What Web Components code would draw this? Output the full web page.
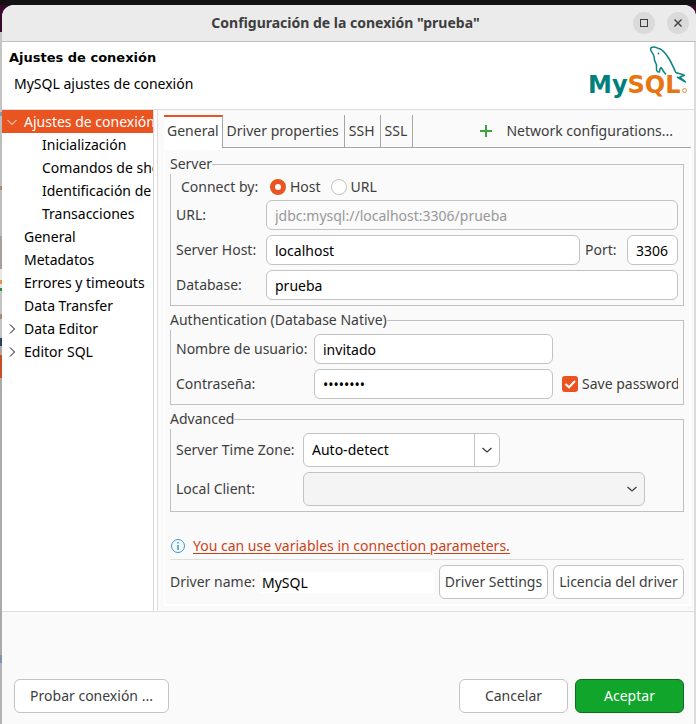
<!DOCTYPE html>
<html lang="es">
<head>
<meta charset="utf-8">
<title>Configuración de la conexión "prueba"</title>
<style>
  html, body { margin: 0; min-height: 100vh; }
  body { display: flex; font: 14px/20px "Noto Sans", "Open Sans", sans-serif; color: #3d3d3d; }
</style>
</head>
<body>
<connection-dialog></connection-dialog>
<script>
const css = `
  *, *::before, *::after { box-sizing: border-box; }
  button, input, select { font: inherit; color: inherit; margin: 0; }
  .chevron { fill: none; stroke: #3d3d3d; stroke-width: 1.3; }
`;
const define = (name, template) => customElements.define(name, class extends HTMLElement {
  constructor() {
    super();
    this.attachShadow({ mode: "open" });
  }
  connectedCallback() {
    const a = (key, fallback = "") => this.getAttribute(key) ?? fallback;
    this.shadowRoot.innerHTML = `<style>${css}</style>` + template(a, this);
  }
});

define("push-button", a => `
  <style>
    :host { display: block; flex: none; }
    button { width: 100%; height: 34px; padding: 0 4px; border: 1px solid #c3c3c3; border-radius: 6px;
      background: #fff; white-space: nowrap; }
    :host([primary]) button { background: #12a52b; border-color: #0c6f1d; color: #fff; }
  </style>
  <button type="button"><slot></slot></button>`);

define("title-bar", a => `
  <style>
    :host { display: grid; grid-template-columns: 1fr auto 1fr; align-items: center; height: 37px;
      background: #ebebeb; border-bottom: 1px solid #bfbfbf; border-radius: 12px 12px 0 0; padding-right: 7px; }
    h1 { grid-column: 2; margin: 0; font-size: 14px; line-height: 20px; font-weight: 700; color: #3d3d3d; white-space: nowrap; }
    .buttons { display: flex; justify-content: flex-end; gap: 12px; }
    button { width: 22px; height: 22px; padding: 0; border: 0; border-radius: 50%; background: #dadada; display: grid; place-items: center; }
    svg { fill: none; stroke: #3d3d3d; stroke-width: 1; }
  </style>
  <h1><slot></slot></h1>
  <div class="buttons">
    <button aria-label="Maximizar"><svg width="10" height="10"><rect x="1.5" y="1.5" width="7" height="7"/></svg></button>
    <button aria-label="Cerrar"><svg width="10" height="10" style="stroke-width:1.4"><path d="M1.5 1.5 8.5 8.5M8.5 1.5 1.5 8.5"/></svg></button>
  </div>`);

define("mysql-logo", a => `
  <style>:host { display: block; flex: none; } svg { display: block; }</style>
  <svg width="106" height="60" viewBox="0 0 106 60" role="img" aria-label="MySQL">
    <text x="2" y="51" font-family="DejaVu Sans" font-size="24" font-weight="700" fill="#00807c">My<tspan fill="#e87511">SQL</tspan></text>
    <circle cx="98.500" cy="48.500" r="2" fill="none" stroke="#e87511" stroke-width=".8"/>
    <path fill="none" stroke="#0b8583" stroke-width="1.500" stroke-linejoin="round" d="M66 10.500C64.500 8 63.500 5.500 66.500 5.300C68 4.600 70.500 5.700 72 6.300C76 7 80.500 12.500 83.500 17.500C85.500 21 88 26.500 89.800 30.500C92.500 31.500 96 32.200 98.500 33.500C97 34.500 95 34 93.800 35C95 37 98 38 99.500 40C96 38 93.500 36.500 91 35M66 10.500C68 12.500 68.300 15 68.500 18C69 20.500 71.500 22 70.500 26C70 29 72 30.500 73.500 30C73.800 28 73.500 27 75 25.500C76.500 28 78 30.500 80 32.500"/>
    <circle cx="72.500" cy="11.500" r=".9" fill="#0b8583"/>
  </svg>`);

define("dialog-header", a => `
  <style>
    :host { display: flex; justify-content: space-between; height: 68px; background: #fff; border-bottom: 1px solid #dedede; color: #000; }
    .text { padding: 6px 0 0 7px; }
    h2 { margin: 0 0 6px; font: 700 13px/20px "DejaVu Sans", sans-serif; }
    p { margin: 0 0 0 5px; }
    mysql-logo { margin-right: 2px; }
  </style>
  <div class="text"><h2>${a("heading")}</h2><p><slot></slot></p></div>
  <mysql-logo></mysql-logo>`);

define("tree-item", a => `
  <style>
    :host { display: flex; align-items: center; height: 23px; overflow: hidden; color: #000; white-space: nowrap; padding-left: 4px; }
    :host([child]) { padding-left: 22px; }
    :host([selected]) { background: #e95420; color: #fff; }
    svg { flex: none; width: 12px; height: 12px; margin-right: 6px; fill: none; stroke: currentColor; stroke-width: 1; }
  </style>
  <svg viewBox="0 0 12 12">${{ open: '<path d="M1.500 4 6 8.500 10.500 4"/>', closed: '<path d="M4 1.500 8.500 6 4 10.500"/>' }[a("state")] || ""}</svg>
  <slot></slot>`);

define("settings-tree", a => `
  <style>:host { display: block; background: #fff; border-right: 1px solid #d9d9d9; overflow: hidden; }</style>
  <nav role="tree"><slot></slot></nav>`);

define("tab-bar", a => `
  <style>
    :host { display: flex; height: 33px; }
    button { flex: none; height: 33px; border: 0; border-right: 1px solid #a6a6a6; border-bottom: 1px solid #a6a6a6; background: none; padding: 0 5px 0 4px; white-space: nowrap; }
    button[aria-selected=true] { background: #fff; border-top: 2px solid #e95420; border-bottom: 0; padding: 0 3px 3px; }
    .net { flex: 1; display: flex; justify-content: flex-end; align-items: center; border-bottom: 1px solid #a6a6a6; padding-right: 13px; }
    .net button { border: 0; display: flex; align-items: center; gap: 14px; }
  </style>
  <button role="tab" aria-selected="true">General</button>
  <button role="tab">Driver properties</button>
  <button role="tab">SSH</button>
  <button role="tab">SSL</button>
  <div class="net"><button><svg width="12" height="12"><path d="M6 0V12M0 6H12" stroke="#3fa33f" stroke-width="2"/></svg>Network configurations...</button></div>`);

define("group-box", a => `
  <style>
    :host { display: block; }
    fieldset { margin: 0; padding: 0; border: 1px solid #c0c0c0; min-width: 0; }
    legend { padding: 0; margin-left: -1px; height: 20px; background: #fafafa; }
    .rows { display: grid; gap: 5px; padding: 4px 5px 5px; }
  </style>
  <fieldset><legend>${a("heading")}</legend><div class="rows"><slot></slot></div></fieldset>`);

define("form-row", a => `
  <style>:host { display: flex; align-items: center; gap: 5px; min-width: 0; overflow: hidden; }</style><slot></slot>`);

define("text-field", a => `
  <style>
    :host { display: flex; align-items: center; flex: 1; min-width: 0; }
    :host([fixed]) { flex: none; }
    label { flex: none; width: var(--label, auto); white-space: nowrap; }
    input { flex: 1; min-width: 0; width: 100%; height: 30px; padding: 0 8px; border: 1px solid #c3c3c3; border-radius: 6px; background: #fff; color: #000; outline: 0; }
    input:disabled { background: #fafafa; color: #989898; }
    :host([plain]) input { height: 21px; border: 0; border-radius: 0; padding: 0 2px; }
  </style>
  <label for="f">${a("label")}</label>
  <input id="f" type="${a("type", "text")}" value="${a("value")}" ${a("off", null) !== null ? "disabled" : ""}>`);

define("connect-choice", a => `
  <style>
    :host { display: flex; align-items: center; height: 17px; padding-left: 5px; }
    .caption { width: 89px; }
    label { display: flex; align-items: center; gap: 4px; margin-right: 10px; }
    input { appearance: none; width: 16px; height: 16px; border: 1px solid #c3c3c3; border-radius: 50%; background: #fff; }
    input:checked { border: 5px solid #e95420; }
  </style>
  <span class="caption">Connect by:</span>
  <label><input type="radio" name="by" checked>Host</label>
  <label><input type="radio" name="by">URL</label>`);

define("check-box", a => `
  <style>
    :host { display: block; flex: 1; min-width: 0; overflow: hidden; margin-left: 4px; }
    label { display: flex; align-items: center; gap: 4px; white-space: nowrap; }
    .box { display: grid; flex: none; }
    .box > * { grid-area: 1 / 1; }
    input { appearance: none; width: 16px; height: 16px; border-radius: 3px; background: #e95420; }
    svg { pointer-events: none; fill: none; stroke: #fff; stroke-width: 2; }
  </style>
  <label><span class="box"><input type="checkbox" checked><svg width="16" height="16"><path d="M3.500 8 7 11.300 13 5"/></svg></span><slot></slot></label>`);

define("select-field", a => `
  <style>
    :host { display: grid; grid-template-columns: 127px 1fr 26px; align-items: center; }
    select { grid-area: 1 / 2 / 2 / 4; width: 100%; height: 34px; padding: 0 8px; appearance: none; border: 1px solid #c3c3c3; border-radius: 6px; background: #fff; color: #000; }
    .arrow { grid-area: 1 / 3; height: 34px; display: grid; place-items: center; pointer-events: none; border-left: 1px solid transparent; padding-right: 2px; }
    :host([split]) .arrow { border-color: #c3c3c3; }
    :host([dim]) select { background: #f4f4f4; }
  </style>
  <label for="s">${a("label")}</label>
  <select id="s"><option>${a("value")}</option></select>
  <span class="arrow"><svg class="chevron" width="12" height="12"><path d="M1.500 4 6 8 10.500 4"/></svg></span>`);

define("info-link", a => `
  <style>
    :host { display: flex; align-items: center; gap: 7px; height: 19px; }
    a { color: #cb4218; text-decoration: underline; text-underline-offset: 2px; }
  </style>
  <svg width="16" height="16"><circle cx="8" cy="8" r="6.500" fill="#f5fbff" stroke="#3d95cf"/><path d="M8 7V12M8 4V5.500" stroke="#3d95cf" stroke-width="1.500"/></svg>
  <a href="#"><slot></slot></a>`);

define("connection-dialog", a => `
  <style>
    :host { flex: 1; min-width: 0; display: flex; flex-direction: column; padding: 5px 0 0 2px;
      background:
        linear-gradient(#131313 5px, transparent 5px),
        linear-gradient(90deg, transparent 2px, #3a0a2a 2px) 0 0 / 100% 40px no-repeat,
        linear-gradient(#3a0a2a 32px, #c4c4c4 32px 112px, #7e9aab 112px 116px, #bdbdbd 116px 186px, #a58e6e 186px 190px, #bdbdbd 190px 236px, #a89f9b 236px 269px, #e8e8e8 269px 280px, #ed9249 280px 284px, #d8e6d8 284px 288px, #2d8b3d 288px 291px, #c4c4c4 291px 314px, #a58e6e 314px 319px, #c4c4c4 319px 338px, #26435f 338px 346px, #aaa 346px 355px, #c84f25 355px 378px, #aaa 378px 655px, #7c93ad 655px 663px, #b4b4b4 663px); }
    .window { flex: 1; display: flex; flex-direction: column; background: #fafafa; border-radius: 12px 12px 0 0; }
    .below { flex: 1; display: flex; flex-direction: column; border-right: 2px solid #dcdcdc; }
    main { display: grid; grid-template-columns: 152px 1fr; column-gap: 3px; background: #fff; border-bottom: 1px solid #dedede; }
    .page { min-width: 0; border-left: 1px solid #dedede; background: #fafafa; padding: 5px 3px 5px 6px; }
    .panel { border: 2px solid #fff; border-left-width: 1px; padding: 4px 5px 5px; display: grid; gap: 4px; }
    .server { --label: 90px; }
    .auth { --label: 138px; }
    .auth text-field { flex: none; width: 377px; }
    .port { --label: 42px; width: 93px; }
    .note { margin-top: 20px; }
    .driver { display: flex; align-items: center; gap: 5px; border-top: 1px solid #dedede; padding-top: 5px; --label: 90px; }
    .settings { width: 109px; } .license { width: 131px; }
    footer { display: flex; gap: 7px; padding: 67px 10px 11px 12px; margin-top: auto; }
    .test { width: 155px; margin-right: auto; }
    .action { width: 109px; }
  </style>
  <div class="window">
    <title-bar>Configuración de la conexión "prueba"</title-bar>
    <div class="below">
      <dialog-header heading="Ajustes de conexión">MySQL ajustes de conexión</dialog-header>
      <main>
        <settings-tree>
          <tree-item state="open" selected>Ajustes de conexión</tree-item>
          <tree-item child>Inicialización</tree-item>
          <tree-item child>Comandos de shell</tree-item>
          <tree-item child>Identificación de</tree-item>
          <tree-item child>Transacciones</tree-item>
          <tree-item>General</tree-item>
          <tree-item>Metadatos</tree-item>
          <tree-item>Errores y timeouts</tree-item>
          <tree-item>Data Transfer</tree-item>
          <tree-item state="closed">Data Editor</tree-item>
          <tree-item state="closed">Editor SQL</tree-item>
        </settings-tree>
        <div class="page">
          <tab-bar></tab-bar>
          <div class="panel">
            <group-box heading="Server" class="server">
              <connect-choice></connect-choice>
              <text-field label="URL:" value="jdbc:mysql://localhost:3306/prueba" off></text-field>
              <form-row>
                <text-field label="Server Host:" value="localhost"></text-field>
                <text-field class="port" fixed label="Port:" value="3306"></text-field>
              </form-row>
              <text-field label="Database:" value="prueba"></text-field>
            </group-box>
            <group-box heading="Authentication (Database Native)" class="auth">
              <form-row><text-field label="Nombre de usuario:" value="invitado"></text-field></form-row>
              <form-row>
                <text-field label="Contraseña:" type="password" value="invitado"></text-field>
                <check-box>Save password</check-box>
              </form-row>
            </group-box>
            <group-box heading="Advanced">
              <select-field split label="Server Time Zone:" value="Auto-detect" style="width:324px"></select-field>
              <select-field dim label="Local Client:" style="width:469px"></select-field>
            </group-box>
            <info-link class="note">You can use variables in connection parameters.</info-link>
            <div class="driver">
              <text-field plain label="Driver name:" value="MySQL"></text-field>
              <push-button class="settings">Driver Settings</push-button>
              <push-button class="license">Licencia del driver</push-button>
            </div>
          </div>
        </div>
      </main>
      <footer>
        <push-button class="test">Probar conexión ...</push-button>
        <push-button class="action">Cancelar</push-button>
        <push-button class="action" primary>Aceptar</push-button>
      </footer>
    </div>
  </div>`);
</script>
</body>
</html>
